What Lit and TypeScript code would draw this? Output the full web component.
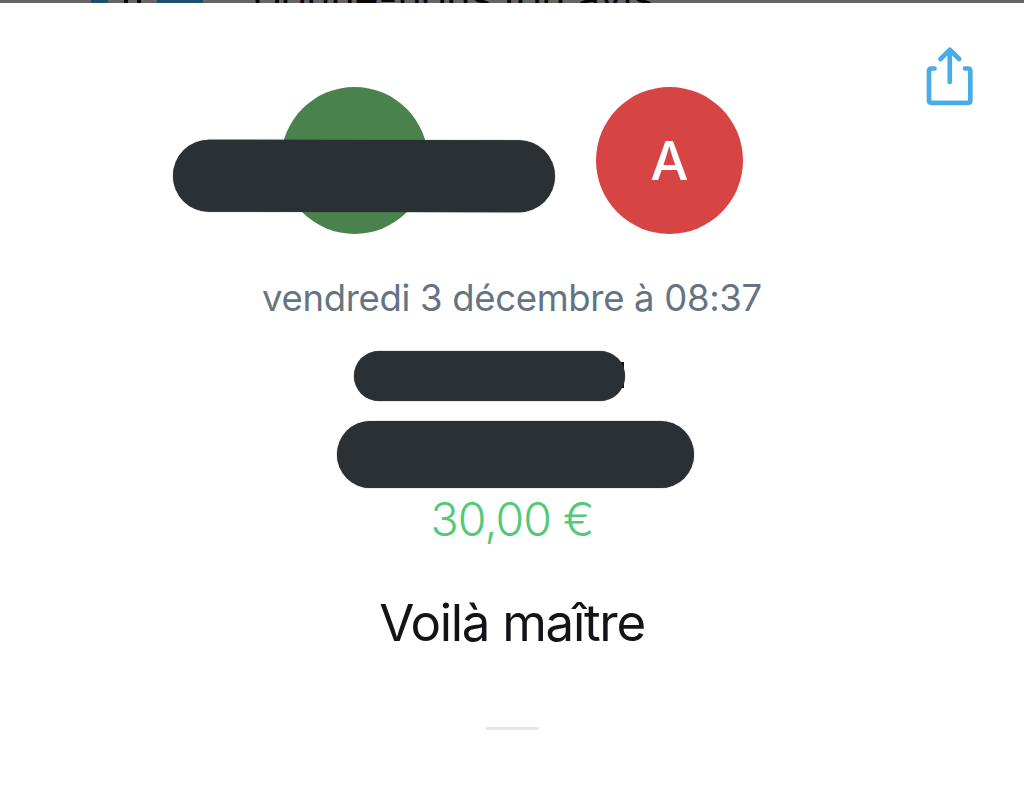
import { LitElement, html, css } from "lit";
import { customElement, property } from "lit/decorators.js";

@customElement("user-avatar")
export class UserAvatar extends LitElement {
  static styles = [
    css`
      :host {
        display: block;
      }

      .avatar {
        display: flex;
        align-items: center;
        justify-content: center;
        width: 147px;
        height: 147px;
        border-radius: 50%;
        color: #ffffff;
        font-size: 54px;
        font-weight: 500;
        line-height: 1;
      }

      .green {
        background-color: #4a824e;
      }

      .red {
        background-color: #d64444;
      }
    `,
  ];

  @property() initial = "";
  @property() color = "green";

  render() {
    return html`<div class="avatar ${this.color}">${this.initial}</div>`;
  }
}

@customElement("share-button")
export class ShareButton extends LitElement {
  static styles = [
    css`
      :host {
        display: block;
      }

      button {
        display: block;
        padding: 0;
        border: none;
        background: none;
        cursor: pointer;
      }

      svg {
        display: block;
        fill: none;
        stroke: #4aabea;
        stroke-width: 4.7;
        stroke-linecap: round;
        stroke-linejoin: round;
      }
    `,
  ];

  render() {
    return html`
      <button>
        <svg width="50" height="62" viewBox="0 0 50 62">
          <path d="M9.500 23.5H6.5Q4 23.5 4 26V55.5Q4 57.800 6.5 57.800H43Q45.300 57.800 45.300 55.5V26Q45.300 23.5 43 23.5H40" />
          <path d="M24.800 37V4.800M15.500 14L24.800 4.800L34.200 14" />
        </svg>
      </button>
    `;
  }
}

@customElement("app-root")
export class AppRoot extends LitElement {
  static styles = [
    css`
      :host {
        display: flex;
        flex-direction: column;
        width: 1024px;
        height: 786px;
        overflow: hidden;
        background-color: #ffffff;
        font-family: Inter, "Liberation Sans", sans-serif;
      }

      /* Page under the sheet, only its last pixels stay visible */
      .backdrop {
        position: relative;
        flex: none;
        height: 3px;
        overflow: hidden;
        background-color: #666465;
      }

      .backdrop-title {
        position: absolute;
        left: 252px;
        bottom: -10px;
        color: #080808;
        font-size: 41px;
        line-height: 30px;
        white-space: nowrap;
      }

      .chip {
        position: absolute;
        top: 0;
        height: 3px;
        background-color: #1d4e6d;
      }

      .chip-small {
        left: 91px;
        width: 17px;
      }

      .chip-large {
        left: 157px;
        width: 46px;
      }

      .mark {
        position: absolute;
        top: 0;
        left: 124px;
        width: 4px;
        height: 3px;
        background-color: #080808;
        box-shadow: 13px 0 #080808;
      }

      .sheet {
        position: relative;
        display: flex;
        flex: 1;
        flex-direction: column;
        align-items: center;
        padding-top: 84px;
        background-color: #ffffff;
      }

      share-button {
        position: absolute;
        top: 42px;
        right: 49px;
      }

      .avatars {
        position: relative;
        display: flex;
        gap: 168px;
      }

      .mask {
        border-radius: 40px;
        background-color: #2b3034;
        box-shadow: 0 0 1px #2b3034;
      }

      .mask-avatar {
        position: absolute;
        top: 53px;
        left: -108px;
        width: 382px;
        height: 71.5px;
        transform: rotate(0.1deg);
      }

      .date {
        margin-top: 42px;
        color: #647482;
        font-size: 36.5px;
        line-height: 44px;
        letter-spacing: -0.32px;
        white-space: nowrap;
      }

      .name {
        position: relative;
        margin: 31px 46px 0 0;
      }

      /* End of the last letter, sticking out from behind the mask */
      .name::before {
        content: "";
        position: absolute;
        top: 11px;
        right: 1px;
        width: 3px;
        height: 26px;
        background-color: #131418;
      }

      .mask-name {
        position: relative;
        width: 271px;
        height: 50px;
      }

      .mask-action {
        width: 357px;
        height: 67px;
        margin: 20px 0 0 7px;
      }

      .amount {
        margin-top: 3px;
        color: #52c878;
        font-size: 46.5px;
        font-weight: 300;
        line-height: 56px;
        letter-spacing: -0.95px;
        white-space: nowrap;
      }

      .message {
        margin-top: 45px;
        color: #131418;
        font-size: 51px;
        line-height: 62px;
        letter-spacing: -1.3px;
        white-space: nowrap;
      }

      .divider {
        width: 53px;
        height: 3px;
        margin-top: 73px;
        background-color: #e4e6ee;
      }
    `,
  ];

  render() {
    return html`
      <div class="backdrop">
        <span class="chip chip-small"></span>
        <span class="mark"></span>
        <span class="chip chip-large"></span>
        <span class="backdrop-title">Donne-nous ton avis</span>
      </div>
      <main class="sheet">
        <share-button></share-button>
        <div class="avatars">
          <user-avatar color="green"></user-avatar>
          <user-avatar color="red" initial="A"></user-avatar>
          <div class="mask mask-avatar"></div>
        </div>
        <div class="date">vendredi 3 décembre à 08:37</div>
        <div class="name"><div class="mask mask-name"></div></div>
        <div class="mask mask-action"></div>
        <div class="amount">30,00 €</div>
        <div class="message">Voilà maître</div>
        <div class="divider"></div>
      </main>
    `;
  }
}
